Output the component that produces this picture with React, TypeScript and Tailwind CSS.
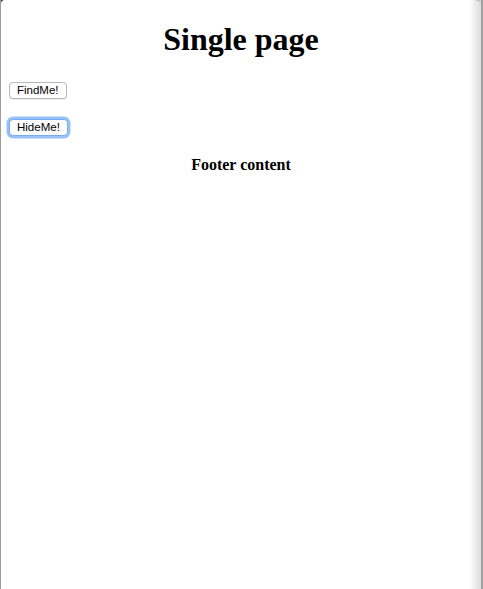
import React from 'react';

const serif = "font-['Liberation_Serif','Times_New_Roman',serif]";

function SmallButton({ label, focused }: { label: string; focused?: boolean }) {
  return (
    <button
      type="button"
      className={`h-[17px] rounded-[4px] border bg-white px-[7px] text-[11.5px] leading-[15px] text-black font-['Liberation_Sans',Arial,sans-serif] ${
        focused
          ? 'border-[#78aaf0] outline-none ring-[2.5px] ring-[#97c1f8]'
          : 'border-[#b8b8b8] shadow-[0_0.5px_0.5px_rgba(0,0,0,0.15)]'
      }`}>
      {label}
    </button>
  );
}

export default function App() {
  return (
    <div className="relative flex h-[589px] w-[483px] overflow-hidden bg-[#3a3a3a]">
      <div className="w-px shrink-0 bg-[#9c9c9c]" />
      <main className={`relative flex flex-1 flex-col rounded-tl-[4px] rounded-tr-[6px] bg-white px-2 pt-[21px] text-black ${serif}`}>
        <h1 className="text-center text-[32px] leading-[37px] font-bold">Single page</h1>
        <div className="mt-[24px] flex flex-col items-start gap-[20px]">
          <SmallButton label="FindMe!" />
          <SmallButton label="HideMe!" focused />
        </div>
        <h4 className="mt-[20px] text-center text-[16px] leading-[18px] font-bold">Footer content</h4>
        <div className="pointer-events-none absolute inset-y-0 right-0 w-[12px] bg-gradient-to-r from-white/0 to-[#dcdcdc]" />
      </main>
      <div className="w-[2px] shrink-0 bg-[#a2a2a2]" />
    </div>
  );
}
